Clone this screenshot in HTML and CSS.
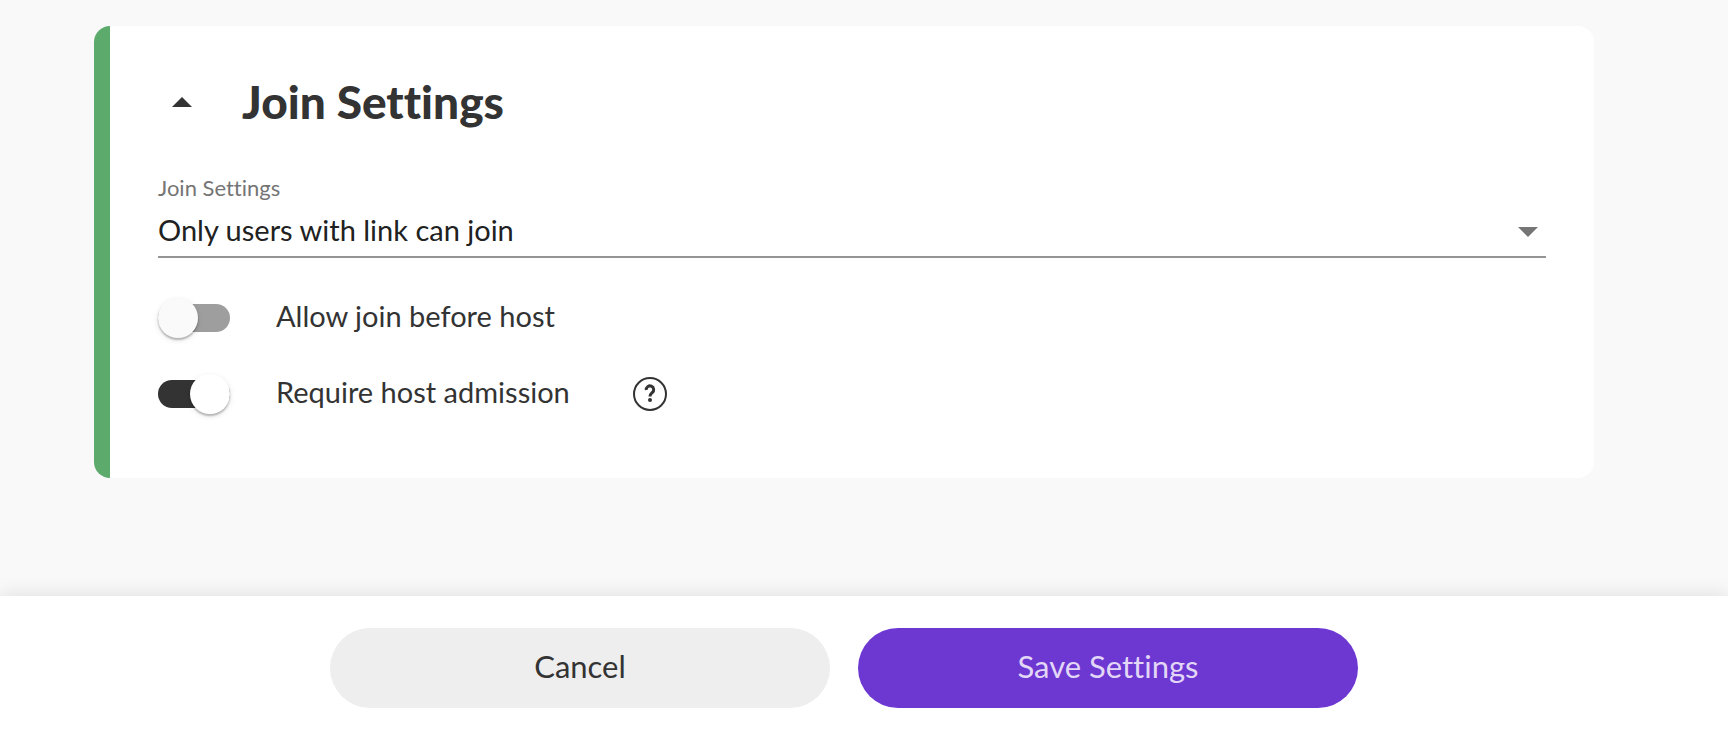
FILE: index.html
```html
<!DOCTYPE html>
<html lang="en">
<head>
  <meta charset="UTF-8" />
  <title>Join Settings</title>
  <link rel="stylesheet" href="styles.css">
</head>
<body>
  <main class="content">
    <section class="card">
      <div class="card-header">
        <button type="button" class="toggle-btn" id="toggle" aria-label="Collapse" aria-expanded="true">
          <svg viewBox="0 0 48 48"><path d="M14 29h20L24 19z" /></svg>
        </button>
        <h2>Join Settings</h2>
      </div>

      <div class="card-body" id="card-body">
        <div class="field">
          <label for="join-type">Join Settings</label>
          <div class="select-wrap">
            <select id="join-type">
              <option>Only users with link can join</option>
            </select>
            <svg class="arrow" viewBox="0 0 20 10"><path d="M0 0h20L10 10z" /></svg>
          </div>
        </div>

        <div class="row">
          <input type="checkbox" class="switch" id="before-host" />
          <label for="before-host">Allow join before host</label>
        </div>

        <div class="row">
          <input type="checkbox" class="switch" id="admission" checked />
          <label for="admission">Require host admission</label>
          <button type="button" class="help-btn" aria-label="Help">
            <svg viewBox="0 0 40 40">
              <circle cx="20" cy="20" r="16" />
              <path d="M16.300 16a3.700 3.700 0 1 1 6 2.500c-1.400 1.200-2.300 1.700-2.300 4" />
              <circle class="dot" cx="20" cy="26" r="2" />
            </svg>
          </button>
        </div>
      </div>
    </section>
  </main>

  <footer class="actions">
    <button type="button" class="btn">Cancel</button>
    <button type="submit" class="btn save-btn">Save Settings</button>
  </footer>

  <script>
    const toggle = document.getElementById("toggle");
    toggle.addEventListener("click", () => {
      const body = document.getElementById("card-body");
      body.hidden = !body.hidden;
      toggle.setAttribute("aria-expanded", String(!body.hidden));
    });
  </script>
</body>
</html>
```
FILE: styles.css
```css
* { box-sizing: border-box; }
body {
  margin: 0;
  min-height: 100vh;
  display: flex;
  flex-direction: column;
  font-family: Lato, "Open Sans", sans-serif;
  font-size: 29px;
  line-height: 40px;
  font-variant-ligatures: none;
  color: #333;
  background-color: #f9f9f9;
}
button, select {
  font: inherit;
  color: inherit;
  border: none;
  padding: 0;
  background: none;
  cursor: pointer;
}
svg { display: block; }

.content {
  flex: 1;
  padding: 26px 134px 48px 94px;
}
.card {
  background-color: #fff;
  border-left: 16px solid #5dab6c;
  border-radius: 16px;
  padding: 48px 48px 64px;
}
.card-header {
  display: flex;
  align-items: center;
  gap: 36px;
}
.card-header h2 {
  margin: 0;
  font-size: 46px;
  line-height: 56px;
  font-weight: 900;
}
.toggle-btn, .toggle-btn svg {
  width: 48px;
  height: 48px;
  fill: #333;
}

.field {
  margin-top: 46px;
  margin-bottom: 40px;
}
.field label {
  display: block;
  font-size: 22px;
  line-height: 24px;
  color: #757575;
}
.select-wrap {
  display: flex;
  align-items: center;
  height: 58px;
  padding-top: 4px;
  border-bottom: 2px solid #949494;
}
.select-wrap select {
  flex: 1;
  height: 52px;
  padding-right: 28px;
  margin-right: -28px;
  appearance: none;
  color: #212121;
  outline: none;
}
.arrow {
  width: 20px;
  height: 10px;
  margin-top: 4px;
  margin-right: 8px;
  fill: #757575;
  pointer-events: none;
}

.row {
  display: flex;
  align-items: center;
  height: 40px;
}
.row + .row { margin-top: 36px; }
.row label {
  margin-left: 46px;
  padding-bottom: 4px;
  cursor: pointer;
}
.switch {
  appearance: none;
  display: flex;
  align-items: center;
  width: 72px;
  height: 28px;
  margin: 0;
  border-radius: 14px;
  background-color: #9e9e9e;
  cursor: pointer;
}
.switch::before {
  content: "";
  flex: none;
  width: 40px;
  height: 40px;
  border-radius: 50%;
  background-color: #fafafa;
  box-shadow: 0 2px 2px rgba(0,0,0,0.25), 0 2px 6px rgba(0,0,0,0.1);
}
.switch:checked {
  justify-content: flex-end;
  background-color: #333;
}
.switch:checked::before { background-color: #fff; }
.help-btn {
  margin-left: 60px;
}
.help-btn svg {
  width: 40px;
  height: 40px;
  fill: none;
  stroke: #333;
  stroke-width: 2;
}
.help-btn path { stroke-width: 3; }
.help-btn .dot {
  fill: #333;
  stroke: none;
}

.actions {
  display: flex;
  justify-content: center;
  gap: 28px;
  padding: 32px 40px 40px 0;
  background-color: #fff;
  box-shadow: 0 0 20px rgba(0,0,0,0.12);
}
.btn {
  width: 500px;
  height: 80px;
  padding-bottom: 4px;
  border-radius: 40px;
  font-size: 31px;
  background-color: #eee;
}
.save-btn {
  background-color: #6d38d2;
  color: #e2d7f6;
}
```
